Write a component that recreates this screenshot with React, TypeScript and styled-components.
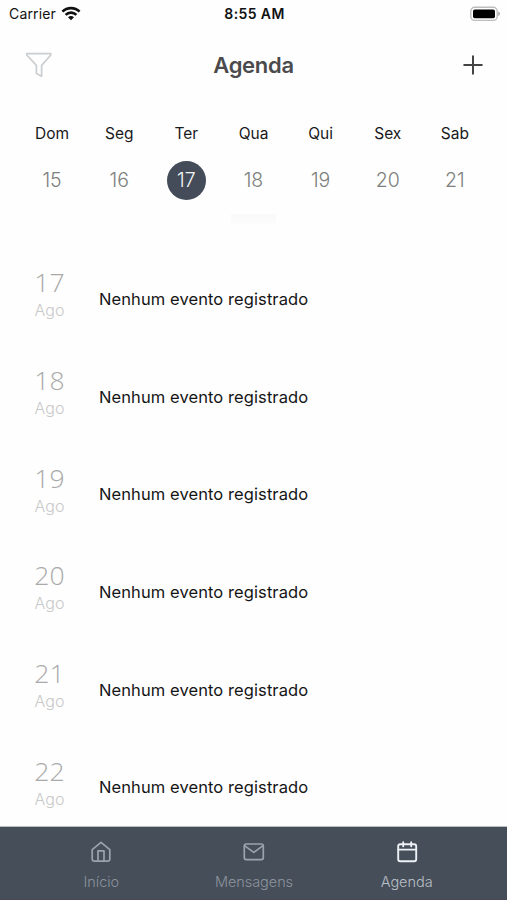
import React from "react";
import styled, { createGlobalStyle } from "styled-components";

const Global = createGlobalStyle`
  * { box-sizing: border-box; }
  body { margin: 0; background: #fff; font-family: Inter, "Liberation Sans", sans-serif; }
`;

const Screen = styled.div`
  width: 507px;
  height: 900px;
  display: flex;
  flex-direction: column;
  overflow: hidden;
  background: #fefefe;
`;

const StatusBar = styled.div`
  height: 27px;
  flex: none;
  display: grid;
  grid-template-columns: 1fr auto 1fr;
  align-items: center;
  padding: 0 7px 0 9px;
  color: #111;
`;

const Carrier = styled.div`
  display: flex;
  align-items: center;
  gap: 5px;
  font-size: 14px;
  letter-spacing: 0.15px;
`;

const Clock = styled.div`
  font-size: 14px;
  font-weight: 600;
  letter-spacing: 0.4px;
`;

const BatterySlot = styled.div`
  display: flex;
  justify-content: flex-end;
`;

const Header = styled.header`
  height: 76px;
  flex: none;
  display: grid;
  grid-template-columns: 1fr auto 1fr;
  align-items: center;
  padding: 0 23px 0 25px;
`;

const Title = styled.h1`
  margin: 0;
  padding: 0 2px 1px 0;
  font-size: 22px;
  font-weight: 600;
  letter-spacing: -0.3px;
  color: #4b4b4d;
`;

const IconButton = styled.button<{ $end?: boolean }>`
  justify-self: ${(p) => (p.$end ? "end" : "start")};
  display: flex;
  padding: 0;
  border: 0;
  background: none;
`;

const Week = styled.div`
  height: 111px;
  flex: none;
  padding: 19px 18.5px 0 18.5px;
  display: grid;
  grid-template-columns: repeat(7, 1fr);
  grid-template-rows: 22px 40px;
  row-gap: 16px;
  justify-items: center;
  align-items: center;
`;

const Weekday = styled.div`
  font-size: 15.5px;
  color: #19191b;
`;

const DayNumber = styled.div<{ $active?: boolean }>`
  width: 39px;
  height: 39px;
  border-radius: 50%;
  display: flex;
  align-items: center;
  justify-content: center;
  font-size: 19.5px;
  font-weight: 300;
  background: ${(p) => (p.$active ? "#434c58" : "transparent")};
  color: ${(p) => (p.$active ? "#f3f5f7" : "#7d807c")};
`;

const Knob = styled.div`
  width: 45px;
  height: 10px;
  flex: none;
  align-self: center;
  background: linear-gradient(#f9f9f9, #fcfcfc);
`;

const List = styled.main`
  flex: 1;
  min-height: 0;
  overflow: hidden;
  padding-top: 26px;
`;

const Row = styled.section`
  height: 97.7px;
  display: grid;
  grid-template-columns: 99px 1fr;
  align-items: center;
`;

const DateBlock = styled.div`
  display: flex;
  flex-direction: column;
  align-items: center;
  padding-bottom: 7px;
`;

const BigDay = styled.div`
  font-family: "Open Sans", "Noto Sans", sans-serif;
  font-size: 26.5px;
  line-height: 28px;
  padding-bottom: 2px;
  font-weight: 350;
  color: #a9a9a9;
`;

const Month = styled.div`
  font-size: 16px;
  line-height: 24px;
  font-weight: 300;
  color: #c9c9c9;
`;

const Message = styled.div`
  font-size: 16.5px;
  letter-spacing: 0.09px;
  color: #151516;
`;

const TabBar = styled.nav`
  height: 74px;
  flex: none;
  display: grid;
  grid-template-columns: repeat(3, 1fr);
  padding: 13px 24px 0 25px;
  border-top: 1px solid #b9bdc1;
  border-bottom: 1px solid #484855;
  background: #464e59;
`;

const Tab = styled.div<{ $active?: boolean }>`
  display: flex;
  flex-direction: column;
  align-items: center;
  gap: 8px;
  color: ${(p) => (p.$active ? "#edf1f5" : "#9ba3ac")};
`;

const TabLabel = styled.span<{ $active?: boolean }>`
  font-size: 14.5px;
  line-height: 20px;
  font-weight: 300;
  letter-spacing: -0.05px;
  color: ${(p) => (p.$active ? "#b9bfc6" : "#8b939d")};
`;

const days = ["Dom", "Seg", "Ter", "Qua", "Qui", "Sex", "Sab"];
const dates = [15, 16, 17, 18, 19, 20, 21];
const agenda = [17, 18, 19, 20, 21, 22];

const Wifi = () => (
  <svg width="20" height="16" viewBox="0 0 20 16" fill="none" stroke="#111" strokeWidth="2.6">
    <path d="M1.4 5.6C6.2 .9 13.8 .9 18.6 5.6" />
    <path d="M4.6 8.9C7.6 5.9 12.4 5.9 15.4 8.9" />
    <path d="M7 11.2C8.7 9.6 11.3 9.6 13 11.2L10 14.3Z" fill="#111" stroke="none" />
  </svg>
);

const Battery = () => (
  <svg width="30" height="16" viewBox="0 0 30 16">
    <rect x="0.8" y="1.2" width="26.4" height="13.2" rx="4" fill="#fff" stroke="#bdbdbd" strokeWidth="1.4" />
    <rect x="3" y="3.5" width="22" height="8.8" rx="1.8" fill="#000" />
    <path d="M28.2 5.5Q30 6 30 7.8T28.2 10.1Z" fill="#a9a9a9" />
  </svg>
);

const Funnel = () => (
  <svg width="28" height="26" viewBox="0 0 28 26" fill="none" stroke="#cbced1" strokeWidth="1.7" strokeLinejoin="round">
    <path d="M1.8 1.6H25.8V3L16.6 13.4V24.2L11.4 21.6V13.4L1.8 3Z" />
  </svg>
);

const Plus = () => (
  <svg width="22" height="22" viewBox="0 0 22 22" stroke="#444" strokeWidth="2" strokeLinecap="round">
    <path d="M11 2.2V19.8M2.2 11H19.8" />
  </svg>
);

const House = () => (
  <svg width="24" height="24" viewBox="0 0 24 24" fill="none" stroke="currentColor" strokeWidth="1.7" strokeLinejoin="round">
    <path d="M3.2 9.6L12 2.4L20.8 9.6V19Q20.8 21.2 18.6 21.2H5.4Q3.2 21.2 3.2 19Z" />
    <path d="M9 21V10.8H15V21" />
  </svg>
);

const Mail = () => (
  <svg width="24" height="24" viewBox="0 0 24 24" fill="none" stroke="currentColor" strokeWidth="1.7" strokeLinejoin="round">
    <rect x="2.3" y="4" width="19" height="15.6" rx="2" />
    <path d="M2.5 5.6L11.8 12.4L21.1 5.6" />
  </svg>
);

const Calendar = () => (
  <svg width="24" height="24" viewBox="0 0 24 24" fill="none" stroke="currentColor" strokeWidth="1.9" strokeLinecap="round" strokeLinejoin="round">
    <rect x="3.2" y="4.2" width="18" height="17" rx="2" />
    <path d="M3.2 9.6H21.2M8.2 2.2V6.2M16.2 2.2V6.2" />
  </svg>
);

export default function App() {
  return (
    <>
      <Global />
      <Screen>
        <StatusBar>
          <Carrier>Carrier <Wifi /></Carrier>
          <Clock>8:55 AM</Clock>
          <BatterySlot><Battery /></BatterySlot>
        </StatusBar>
        <Header>
          <IconButton aria-label="Filtrar"><Funnel /></IconButton>
          <Title>Agenda</Title>
          <IconButton $end aria-label="Adicionar"><Plus /></IconButton>
        </Header>
        <Week>
          {days.map((d) => <Weekday key={d}>{d}</Weekday>)}
          {dates.map((n) => <DayNumber key={n} $active={n === 17}>{n}</DayNumber>)}
        </Week>
        <Knob />
        <List>
          {agenda.map((n) => (
            <Row key={n}>
              <DateBlock>
                <BigDay>{n}</BigDay>
                <Month>Ago</Month>
              </DateBlock>
              <Message>Nenhum evento registrado</Message>
            </Row>
          ))}
        </List>
        <TabBar>
          <Tab><House /><TabLabel>Início</TabLabel></Tab>
          <Tab><Mail /><TabLabel>Mensagens</TabLabel></Tab>
          <Tab $active><Calendar /><TabLabel $active>Agenda</TabLabel></Tab>
        </TabBar>
      </Screen>
    </>
  );
}
